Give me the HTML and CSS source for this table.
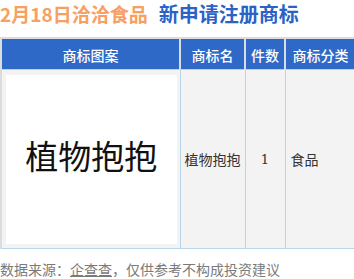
FILE: index.html
```html
<!DOCTYPE html>
<html lang="zh">
<head>
<meta charset="utf-8">
<link rel="stylesheet" href="styles.css">
</head>
<body>
<div class="page">
  <h1 class="title"><span class="date">2月18日洽洽食品</span><span class="sub">新申请注册商标</span></h1>
  <table class="tbl">
    <colgroup>
      <col class="c1"><col class="c2"><col class="c3"><col class="c4">
    </colgroup>
    <thead>
      <tr><th>商标图案</th><th>商标名</th><th>件数</th><th>商标分类</th></tr>
    </thead>
    <tbody>
      <tr>
        <td class="pic"><div class="logo">植物抱抱</div></td>
        <td class="name">植物抱抱</td>
        <td class="num">1</td>
        <td class="cat">食品</td>
      </tr>
    </tbody>
  </table>
  <p class="src">数据来源：<span class="link">企查查</span>，仅供参考不构成投资建议</p>
</div>
</body>
</html>
```
FILE: styles.css
```css
html, body {
  margin: 0;
  padding: 0;
  background: #fff;
}
.page {
  width: 354px;
  font-family: "Noto Sans CJK SC", "Noto Sans", sans-serif;
}
.title {
  margin: 0;
  height: 37px;
  line-height: 28px;
  font-size: 19px;
  font-weight: 700;
  white-space: nowrap;
}
.date { color: #f7a062; }
.sub { color: #2c62c6; margin-left: 11px; font-size: 20px; }
.tbl {
  width: 354px;
  border-collapse: collapse;
  table-layout: fixed;
  border-top: 2px solid #dcdcdc;
  border-left: 2px solid #dcdcdc;
}
.c1 { width: 179px; }
.c2 { width: 65px; }
.c3 { width: 40px; }
.c4 { width: 70px; }
.tbl th {
  height: 29px;
  padding: 1px 0 0;
  background: #2e69c8;
  color: #fff;
  font-size: 14px;
  font-weight: 500;
  border-left: 2px solid #d9dde3;
  line-height: 28px;
}
.tbl th:first-child { border-left: none; }
.tbl td {
  background: #f3f3f3;
  border: 1px solid #b9d5ec;
  padding: 0;
  font-size: 14px;
  color: #333;
}
.tbl td.pic { padding: 5px 3px 4px 4px; }
.logo {
  height: 169px;
  box-sizing: border-box;
  padding-bottom: 10px;
  background: #fff;
  display: flex;
  align-items: center;
  justify-content: center;
  font-size: 33px;
  color: #111;
  font-weight: 400;
}
.tbl td.name { padding-left: 4px; }
.tbl td.num {
  text-align: center;
  font-family: "DejaVu Serif", serif;
  font-size: 13px;
}
.tbl td.cat { padding-left: 5px; }
.src {
  margin: 12px 0 0;
  font-size: 14px;
  color: #7a7a7a;
  line-height: 16px;
  white-space: nowrap;
}
.link { text-decoration: underline; }
```
